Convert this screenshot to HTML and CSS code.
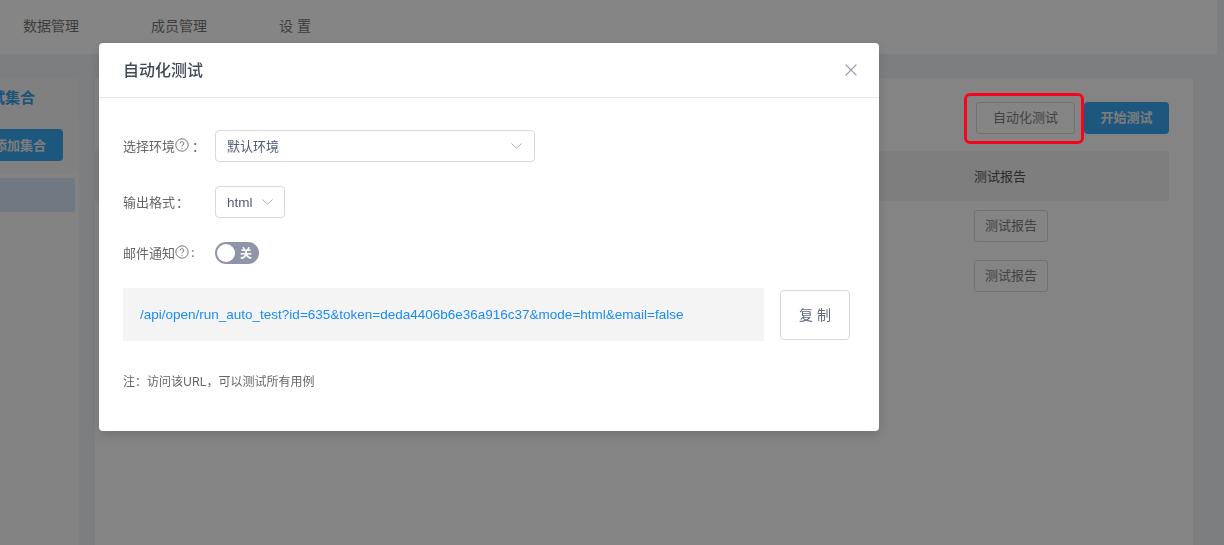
FILE: index.html
```html
<!DOCTYPE html>
<html lang="zh-CN">
<head>
<meta charset="utf-8">
<title>自动化测试</title>
<link rel="stylesheet" href="styles.css">
</head>
<body>
<div class="page">
  <header class="topbar">
    <a class="nav-item nav-a">数据管理</a>
    <a class="nav-item nav-b">成员管理</a>
    <a class="nav-item">设 置</a>
  </header>
  <div class="content">
    <aside class="sidebar">
      <div class="side-head"><span class="side-title">测试集合</span></div>
      <div class="side-body">
        <div class="side-tools"><button class="btn-primary side-add">添加集合</button></div>
        <div class="side-list"><div class="side-row"></div></div>
      </div>
    </aside>
    <main class="panel">
      <div class="toolbar">
        <button class="btn auto-btn">自动化测试</button>
        <button class="btn-primary start-btn">开始测试</button>
      </div>
      <div class="table-head"><span class="report-col">测试报告</span></div>
      <div class="table-row"><button class="btn report-btn">测试报告</button></div>
      <div class="table-row"><button class="btn report-btn">测试报告</button></div>
    </main>
  </div>
</div>
<div class="mask"></div>
<div class="highlight"></div>
<section class="modal">
  <div class="modal-head">
    <h2 class="modal-title">自动化测试</h2>
    <svg class="close" width="12" height="12" viewBox="0 0 12 12"><path d="M.6.6l10.8 10.8M11.4.6L.6 11.4" stroke="#8a96a3" stroke-width="1.1" fill="none"/></svg>
  </div>
  <div class="modal-body">
    <div class="form-row row-env">
      <label class="label">选择环境<svg class="help" width="14" height="14" viewBox="0 0 14 14"><circle cx="7" cy="7" r="6.2" fill="none" stroke="#666" stroke-width=".9"/><path d="M5.2 5.500a1.800 1.800 0 1 1 2.700 1.500c-.6.4-.9.7-.9 1.500" fill="none" stroke="#666" stroke-width=".9"/><circle cx="7" cy="10.300" r=".6" fill="#666"/></svg><span class="colon colon-env">：</span></label>
      <div class="select select-wide"><span class="select-cjk">默认环境</span><svg class="chev" width="11" height="6" viewBox="0 0 11 6"><path d="M.5.5L5.500 5.200 10.500.5" fill="none" stroke="#a3abb5" stroke-width="1"/></svg></div>
    </div>
    <div class="form-row row-format">
      <label class="label">输出格式<span class="colon">：</span></label>
      <div class="select select-small"><span class="select-latin">html</span><svg class="chev" width="11" height="6" viewBox="0 0 11 6"><path d="M.5.5L5.500 5.200 10.500.5" fill="none" stroke="#a3abb5" stroke-width="1"/></svg></div>
    </div>
    <div class="form-row row-mail">
      <label class="label">邮件通知<svg class="help" width="14" height="14" viewBox="0 0 14 14"><circle cx="7" cy="7" r="6.2" fill="none" stroke="#666" stroke-width=".9"/><path d="M5.2 5.500a1.800 1.800 0 1 1 2.700 1.500c-.6.4-.9.7-.9 1.500" fill="none" stroke="#666" stroke-width=".9"/><circle cx="7" cy="10.300" r=".6" fill="#666"/></svg><span class="colon tight">:</span></label>
      <div class="switch"><span class="knob"></span><span class="switch-text">关</span></div>
    </div>
    <div class="url-row">
      <div class="url-box">/api/open/run_auto_test?id=635&amp;token=deda4406b6e36a916c37&amp;mode=html&amp;email=false</div>
      <button class="copy-btn">复 制</button>
    </div>
    <p class="note">注：访问该URL，可以测试所有用例</p>
  </div>
</section>
</body>
</html>
```
FILE: styles.css
```css
* { box-sizing: border-box; }
html, body { margin: 0; height: 100%; overflow: hidden; }
body {
  background: #f0f2f5;
  color: #595959;
  font-family: "Inter", "Noto Sans CJK SC", sans-serif;
  font-size: 13px;
}
button { font-family: inherit; cursor: pointer; }
.page { width: 1224px; height: 545px; }
.topbar {
  width: 1217px;
  height: 54px;
  background: #fff;
  display: flex;
  align-items: center;
  padding: 0 0 4px 23px;
  font-size: 14px;
}
.nav-item { color: #777; }
.nav-a { margin-right: 72px; }
.nav-b { margin-right: 72px; }
.content { display: flex; padding-top: 24px; }
.sidebar { width: 79px; height: 467px; }
.side-head {
  width: 77px;
  height: 39px;
  background: #f6f6f6;
  overflow: hidden;
  display: flex;
  justify-content: flex-end;
  align-items: center;
  padding: 0 42px 2px 0;
}
.side-title { color: #3aa0e6; font-size: 15px; font-weight: 700; white-space: nowrap; flex: none; }
.side-body { background: #fcfcfc; height: 428px; overflow: hidden; }
.side-tools { height: 56px; padding-top: 12px; background: #f6f6f6; }
.side-list { padding-top: 5px; }
.btn-primary {
  background: #3aa8f0;
  border: 0;
  border-radius: 4px;
  color: #eee;
  font-size: 13px;
  font-weight: 700;
  height: 32px;
}
.side-add { display: flex; align-items: center; justify-content: flex-end; width: 63px; padding: 0 17px 2px 0; border-radius: 0 4px 4px 0; white-space: nowrap; }
.side-row { width: 75px; height: 34px; background: #d6e8f8; border-radius: 0 3px 3px 0; }
.panel { width: 1098px; height: 467px; margin-left: 16px; background: #fdfdfd; padding: 24px 24px 0 0; }
.toolbar { display: flex; justify-content: flex-end; gap: 9px; height: 32px; }
.btn {
  background: #fff;
  border: 1px solid #d9d9d9;
  border-radius: 3px;
  color: #808080;
  font-size: 13px;
  height: 32px;
}
.auto-btn { width: 99px; padding: 0 0 3px; background: #fdfdfd; }
.start-btn { width: 85px; padding: 0 0 3px; }
.table-head { height: 50px; margin-top: 17px; background: #f1f1f1; display: flex; align-items: center; padding: 0 0 1px 879px; }
.report-col { color: #555; font-size: 13px; font-weight: 400; }
.table-row { height: 50px; padding: 9px 0 0 879px; }
.report-btn { width: 74px; padding: 0 0 3px; background: #fdfdfd; }
.mask { position: fixed; inset: 0; background: rgba(0, 0, 0, .48); }
.highlight {
  position: fixed;
  left: 964px;
  top: 93px;
  width: 120px;
  height: 51px;
  border: 3px solid #f4071d;
  border-radius: 6px;
}
.modal {
  position: fixed;
  left: 99px;
  top: 43px;
  width: 780px;
  height: 388px;
  background: #fff;
  border-radius: 4px;
  box-shadow: 0 4px 12px rgba(0, 0, 0, .15);
}
.modal-head {
  height: 55px;
  border-bottom: 1px solid #e8e8e8;
  display: flex;
  align-items: center;
  justify-content: space-between;
  padding: 0 22px 0 25px;
}
.modal-title { margin: 0 0 2px -1px; color: #3f4a55; font-size: 16px; font-weight: 500; }
.close { display: block; }
.modal-body { padding: 32px 24px 0; }
.form-row { display: flex; align-items: center; }
.row-env { height: 32px; }
.row-format { height: 32px; margin-top: 24px; }
.row-mail { height: 22px; margin-top: 24px; }
.label { width: 92px; flex: none; display: flex; align-items: center; padding-bottom: 2px; font-size: 13px; color: #666; white-space: nowrap; }
.help { display: block; flex: none; }
.colon { display: inline-block; margin-left: 1px; }
.colon-env { margin-left: 3px; }
.tight { margin-left: 2px; }
.select {
  height: 32px;
  background: #fff;
  border: 1px solid #d9d9d9;
  border-radius: 4px;
  display: flex;
  align-items: center;
  justify-content: space-between;
  padding: 0 12px 0 11px;
  color: #4f5d73;
  font-size: 13px;
}
.select-cjk { padding-bottom: 2px; }
.select-latin { font-family: "Liberation Sans", sans-serif; font-size: 13.500px; }
.select-wide { width: 320px; }
.select-small { width: 70px; padding-right: 11px; }
.switch {
  position: relative;
  width: 44px;
  height: 22px;
  border-radius: 11px;
  background: #8f95a8;
  display: flex;
  align-items: center;
  justify-content: flex-end;
  padding: 0 7px 2px 0;
}
.knob { position: absolute; left: 2px; top: 2px; width: 18px; height: 18px; background: #fff; border-radius: 50%; }
.switch-text { color: #fff; font-size: 12px; font-weight: 700; }
.url-row { display: flex; align-items: center; margin-top: 24px; }
.url-box {
  width: 641px;
  height: 53px;
  background: #f4f4f4;
  color: #1b8cf5;
  font-family: "Liberation Sans", sans-serif;
  font-size: 13.500px;
  line-height: 53px;
  padding-left: 17px;
  white-space: nowrap;
}
.copy-btn {
  width: 70px;
  height: 50px;
  margin-left: 16px;
  background: #fff;
  border: 1px solid #d9d9d9;
  border-radius: 4px;
  color: #5f6b7a;
  font-size: 14px;
  padding: 0 0 2px;
}
.note { margin: 32px 0 0; color: #666; font-size: 12px; line-height: 17px; }
```
